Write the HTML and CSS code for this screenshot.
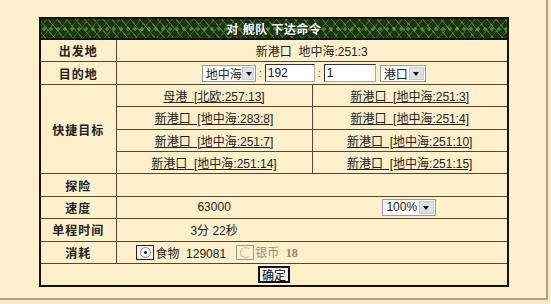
FILE: index.html
```html
<!DOCTYPE html>
<html lang="zh-CN">
<head>
    <meta charset="UTF-8">
    <meta name="viewport" content="width=device-width, initial-scale=1.0">
    <title>对舰队下达命令</title>
    <link rel="stylesheet" href="styles.css">
</head>
<body>
    <div class="frame">
        <table class="orders">
            <colgroup>
                <col class="col-label">
                <col class="col-half">
                <col class="col-half">
            </colgroup>
            <tr>
                <th colspan="3" class="title">对 舰队 下达命令</th>
            </tr>
            <tr>
                <td class="label">出发地</td>
                <td colspan="2">新港口&nbsp; 地中海:251:3</td>
            </tr>
            <tr>
                <td class="label">目的地</td>
                <td colspan="2">
                    <div class="dest">
                        <span class="select sel-sea"><span class="val">地中海</span><span class="arrow"></span></span>
                        <span class="colon">:</span>
                        <input class="field field-x" type="text" value="192">
                        <span class="colon">:</span>
                        <input class="field field-y" type="text" value="1">
                        <span class="select sel-port"><span class="val">港口</span><span class="arrow"></span></span>
                    </div>
                </td>
            </tr>
            <tr>
                <td class="label" rowspan="4">快捷目标</td>
                <td><a href="#">母港&nbsp; [北欧:257:13]</a></td>
                <td><a href="#">新港口&nbsp; [地中海:251:3]</a></td>
            </tr>
            <tr>
                <td><a href="#">新港口&nbsp; [地中海:283:8]</a></td>
                <td><a href="#">新港口&nbsp; [地中海:251:4]</a></td>
            </tr>
            <tr>
                <td><a href="#">新港口&nbsp; [地中海:251:7]</a></td>
                <td><a href="#">新港口&nbsp; [地中海:251:10]</a></td>
            </tr>
            <tr>
                <td><a href="#">新港口&nbsp; [地中海:251:14]</a></td>
                <td><a href="#">新港口&nbsp; [地中海:251:15]</a></td>
            </tr>
            <tr>
                <td class="label">探险</td>
                <td colspan="2"></td>
            </tr>
            <tr>
                <td class="label">速度</td>
                <td colspan="2">
                    <div class="split">
                        <div class="half">63000</div>
                        <div class="half">
                            <span class="select sel-speed"><span class="val">100%</span><span class="arrow"></span></span>
                        </div>
                    </div>
                </td>
            </tr>
            <tr>
                <td class="label">单程时间</td>
                <td colspan="2">
                    <div class="split">
                        <div class="half">3分 22秒</div>
                        <div class="half"></div>
                    </div>
                </td>
            </tr>
            <tr>
                <td class="label">消耗</td>
                <td colspan="2">
                    <div class="split">
                        <div class="half cost">
                            <span class="radio checked"><span class="dot"></span></span><span>食物&nbsp; 129081</span>
                            <span class="radio off"><span class="dot"></span></span><span class="muted">银币&nbsp; <b class="num">18</b></span>
                        </div>
                        <div class="half"></div>
                    </div>
                </td>
            </tr>
            <tr>
                <td colspan="3" class="submit-row"><button class="ok">确定</button></td>
            </tr>
        </table>
    </div>
</body>
</html>
```

FILE: styles.css
```css
body {
    margin: 0;
    background: #f8ecc8;
    font-family: "Liberation Sans", "Noto Sans CJK SC", sans-serif;
    font-size: 12px;
    color: #222;
}
.frame {
    box-sizing: border-box;
    width: 548px;
    height: 300px;
    padding: 17px 0 0 39px;
    background: #fdf0cc;
    border-right: 2px solid #b0a07c;
    border-bottom: 2px solid #b0a07c;
}
.orders {
    width: 470px;
    border-collapse: collapse;
    table-layout: fixed;
    border: 2px solid #15120d;
}
.col-label {
    width: 76px;
}
.orders td {
    height: 21.4px;
    padding: 0;
    text-align: center;
    border: 1px solid #55462d;
    background: #fdf0cb;
    white-space: nowrap;
}
.title {
    height: 19px;
    padding: 0;
    color: #fff;
    font-weight: bold;
    letter-spacing: 0.5px;
    text-shadow: 1px 1px 0 #0d1a08;
    border-bottom: 2px solid #15120d;
    background-color: #1a3410;
    background-image:
        radial-gradient(circle at 3px 10px, rgba(120, 175, 80, 0.6) 0 1.5px, transparent 2px),
        repeating-linear-gradient(50deg, transparent 0 3px, rgba(115, 165, 75, 0.55) 3px 4px, transparent 4px 7px),
        repeating-linear-gradient(-50deg, transparent 0 4px, rgba(85, 135, 55, 0.5) 4px 5px, transparent 5px 8px);
    background-size: 7px 19px, auto, auto;
}
.label {
    font-weight: bold;
    letter-spacing: 1px;
}
a {
    color: #222;
    text-decoration: underline;
}
.dest {
    display: flex;
    align-items: center;
    justify-content: center;
    gap: 2px;
    padding-left: 4px;
}
.colon {
    color: #555;
    font-size: 11px;
    margin: 0 1px;
}
.select {
    display: inline-flex;
    align-items: center;
    justify-content: space-between;
    box-sizing: border-box;
    height: 17px;
    padding: 0 1px 0 3px;
    background: #fff;
    border: 1px solid #9a9a9a;
    text-align: left;
}
.select .val {
    font-size: 12px;
}
.arrow {
    display: inline-block;
    width: 15px;
    height: 13px;
    background: #e0e0e0;
    border: 1px solid #cacaca;
    box-sizing: border-box;
    position: relative;
}
.arrow::after {
    content: "";
    position: absolute;
    left: 3px;
    top: 4px;
    border-left: 3.5px solid transparent;
    border-right: 3.5px solid transparent;
    border-top: 4px solid #111;
}
.sel-sea {
    width: 54px;
}
.sel-port {
    width: 46px;
    margin-left: 2px;
}
.sel-speed {
    width: 54px;
}
.field {
    box-sizing: border-box;
    height: 18px;
    padding: 0 2px;
    margin: 0;
    font-family: "Liberation Sans", sans-serif;
    font-size: 12px;
    color: #111;
    background: #fff;
    border: 1px solid #333;
    border-right-color: #aaa;
    border-bottom-color: #aaa;
}
.field-x {
    width: 50px;
}
.field-y {
    width: 52px;
}
.split {
    display: flex;
    align-items: center;
}
.half {
    flex: 1;
    display: flex;
    align-items: center;
    justify-content: center;
}
.cost {
    padding-left: 4px;
}
.radio {
    box-sizing: border-box;
    width: 18px;
    height: 15px;
    display: inline-flex;
    align-items: center;
    justify-content: center;
    margin-right: 1px;
    background: #f4f4f4;
}
.radio .dot {
    box-sizing: border-box;
    width: 11px;
    height: 11px;
    border-radius: 50%;
    border: 1px solid #888;
    background: #fff;
    position: relative;
}
.radio.checked {
    border: 1px solid #222;
}
.radio.checked .dot::after {
    content: "";
    position: absolute;
    left: 3px;
    top: 3px;
    width: 3px;
    height: 3px;
    border-radius: 50%;
    background: #111;
}
.radio.off {
    margin-left: 10px;
    border: 1px solid #999;
    background: #fdf0cb;
}
.radio.off .dot {
    border-color: #bbb;
    border-right-color: transparent;
    background: transparent;
}
.muted {
    color: #9a8f7c;
}
.num {
    font-family: "Liberation Serif", serif;
    color: #8e8470;
}
.ok {
    box-sizing: border-box;
    height: 17px;
    padding: 0 2px;
    font-family: "Noto Sans CJK SC", sans-serif;
    font-size: 12px;
    line-height: 13px;
    color: #111;
    background: #f0f0f0;
    border: 2px solid #111;
    border-radius: 0;
    cursor: pointer;
}
```
